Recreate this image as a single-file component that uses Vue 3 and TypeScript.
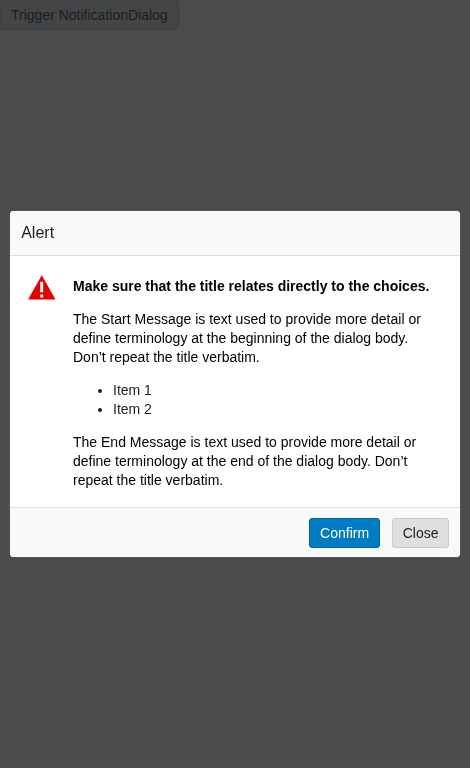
<script setup lang="ts">
import { ref } from 'vue'

const isOpen = ref<boolean>(true)
const items: string[] = ['Item 1', 'Item 2']
</script>

<template>
  <div class="page">
    <button class="button neutral" type="button" @click="isOpen = true">Trigger NotificationDialog</button>
    <div v-if="isOpen" class="overlay">
      <section class="dialog" role="alertdialog" aria-labelledby="dialog-header">
        <header id="dialog-header" class="header">Alert</header>
        <div class="body">
          <svg class="icon" viewBox="0 0 28 25" aria-hidden="true">
            <path fill="#e50000" d="M13.8 .3 27.5 24.5H0Z" />
            <path fill="#fff" d="M12.2 6.7h3v10.5h-3zM12.2 19.6h3v3h-3z" />
          </svg>
          <div class="content">
            <p class="title">Make sure that the title relates directly to the choices.</p>
            <p>The Start Message is text used to provide more detail or define terminology at the beginning of the dialog body. Don’t repeat the title verbatim.</p>
            <ul>
              <li v-for="item in items" :key="item">{{ item }}</li>
            </ul>
            <p>The End Message is text used to provide more detail or define terminology at the end of the dialog body. Don’t repeat the title verbatim.</p>
          </div>
        </div>
        <footer class="footer">
          <button class="button emphasis" type="button" @click="isOpen = false">Confirm</button>
          <button class="button neutral" type="button" @click="isOpen = false">Close</button>
        </footer>
      </section>
    </div>
  </div>
</template>

<style>
body {
  margin: 0;
  background: #fff;
}
</style>

<style scoped>
.page {
  min-height: 100vh;
  color: #1c1f21;
  font: 14px/19px "Liberation Sans", Arial, sans-serif;
}

.button {
  display: block;
  box-sizing: border-box;
  height: 30px;
  margin: 0;
  padding: 0 10px;
  border: 1px solid #c8cacb;
  border-radius: 3px;
  background: #dedfe0;
  color: #1c1f21;
  font: inherit;
  white-space: nowrap;
}

.emphasis {
  border-color: #0065a3;
  background: #007cc3;
  color: #fff;
}

.overlay {
  position: fixed;
  inset: 0;
  display: flex;
  align-items: center;
  justify-content: center;
  padding: 0 10px;
  background: rgba(28, 30, 32, 0.8);
}

.dialog {
  width: 100%;
  overflow: hidden;
  border-radius: 4px;
  background: #fff;
  box-shadow: 0 0 1px rgba(255, 255, 255, 0.4);
}

.header {
  padding: 10px 11.2px;
  border-bottom: 1px solid #dedfe0;
  background: #f9f9f9;
  font-size: 16px;
  line-height: 24px;
}

.body {
  display: flex;
  gap: 17px;
  padding: 21px 28px 17px 18px;
}

.icon {
  flex: none;
  width: 28px;
  height: 25px;
  margin-top: -2px;
}

.content {
  color: #000;
}

p,
ul {
  margin: 0 0 14px;
}

p:last-child {
  margin-bottom: 0;
}

ul {
  padding-left: 40px;
  color: #1c1f21;
}

.title {
  font-weight: 700;
}

.footer {
  display: flex;
  justify-content: flex-end;
  gap: 12px;
  padding: 10px 10.7px 9px 11px;
  border-top: 1px solid #dedfe0;
  background: #f9f9f9;
}

.footer .button {
  padding: 0 9.8px;
}
</style>
